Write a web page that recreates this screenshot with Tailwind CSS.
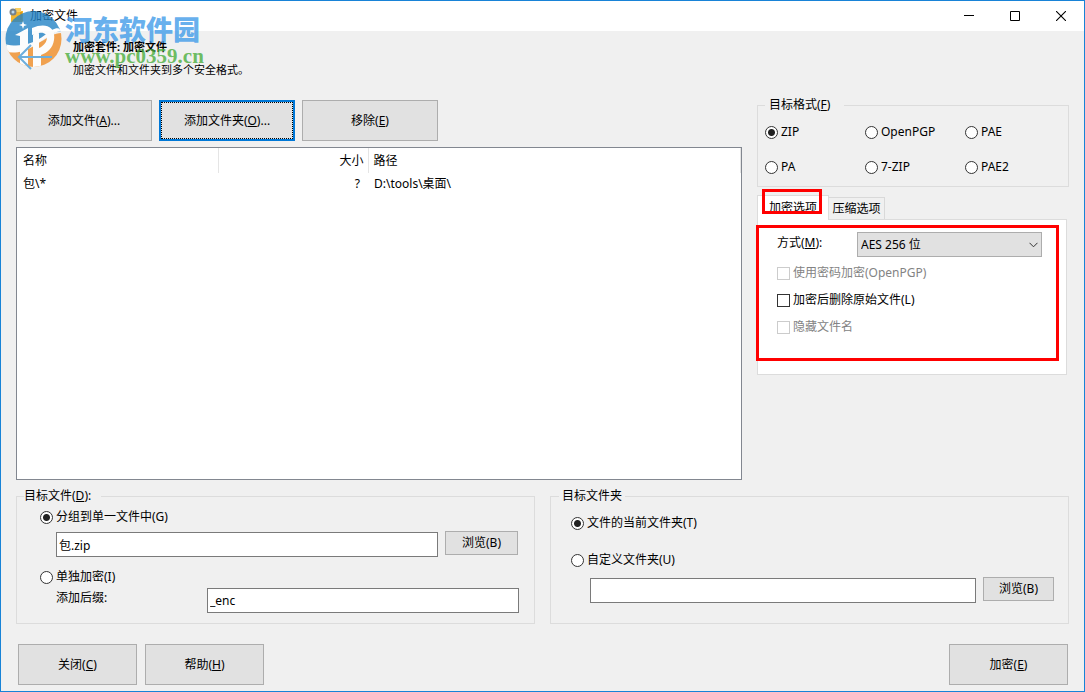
<!DOCTYPE html>
<html lang="zh-CN">
  <head>
    <meta charset="UTF-8" />
    <meta name="viewport" content="width=device-width, initial-scale=1.0" />
    <title>加密文件</title>
    <script src="https://cdn.jsdelivr.net/npm/@tailwindcss/browser@4"></script>
  </head>
  <body class="bg-[#f0f0f0] font-['Noto_Sans','Noto_Sans_CJK_SC',sans-serif] text-[12px] leading-4 text-black">
    <div class="relative min-h-screen flex flex-col border border-[#1883d7]">
      <!-- Title bar -->
      <header class="h-[30px] bg-white flex items-center justify-between">
        <div class="flex items-center gap-[5px] pl-2">
          <svg class="size-4" viewBox="0 0 16 16">
            <path d="M4 3h10v11H2V6z" fill="#f2b530" />
            <path d="M6 0h6v4H6z" fill="#f9cf62" />
            <path d="M11 4h2v8h-2z" fill="#d99a1c" />
            <circle cx="4" cy="4" r="3.5" fill="#76828b" />
            <circle cx="4" cy="4" r="1.5" fill="#bcd9ec" />
          </svg>
          <h1>加密文件</h1>
        </div>
        <div class="flex">
          <button class="w-[46px] h-[30px] flex items-center justify-center" aria-label="最小化">
            <svg class="w-[10px] h-[10px]" viewBox="0 0 10 10"><path d="M0 4h10v1H0z" /></svg>
          </button>
          <button class="w-[46px] h-[30px] flex items-center justify-center" aria-label="最大化">
            <svg class="w-[10px] h-[10px]" viewBox="0 0 10 10"><path d="M.5.5h9v9h-9z" fill="none" stroke="#000" /></svg>
          </button>
          <button class="w-[46px] h-[30px] flex items-center justify-center" aria-label="关闭">
            <svg class="w-[10px] h-[10px]" viewBox="0 0 10 10"><path d="M0 0l10 10M10 0L0 10" stroke="#000" stroke-width="1.1" /></svg>
          </button>
        </div>
      </header>

      <div class="pt-2 pl-[72px] pb-[19px] flex flex-col gap-[7px] text-[11px] leading-4">
        <p class="font-bold">加密套件: 加密文件</p>
        <p>加密文件和文件夹到多个安全格式。</p>
      </div>

      <main class="grow flex flex-col px-[15px] pb-1.5">
        <div class="grow flex gap-[15px]">
          <!-- File list -->
          <div class="grow flex flex-col gap-1.5 pt-[3px]">
            <div class="flex gap-[7px]">
              <button class="w-[136px] h-[41px] border border-[#adadad] bg-[#e1e1e1]">添加文件(<u>A</u>)...</button>
              <button class="w-[136px] h-[41px] border-2 border-[#0078d7] bg-[#e1e1e1] outline outline-dotted outline-black -outline-offset-3">添加文件夹(<u>O</u>)...</button>
              <button class="w-[136px] h-[41px] border border-[#adadad] bg-[#e1e1e1]">移除(<u>E</u>)</button>
            </div>
            <div class="grow border border-[#828790] bg-white">
              <table class="w-full table-fixed">
                <thead>
                  <tr class="h-[25px]">
                    <th class="w-[201px] pl-1.5 border-r border-[#e5e5e5] text-left font-normal">名称</th>
                    <th class="w-[150px] pr-1 border-r border-[#e5e5e5] text-right font-normal">大小</th>
                    <th class="pl-[5px] border-r border-[#e5e5e5] text-left font-normal">路径</th>
                  </tr>
                </thead>
                <tbody>
                  <tr class="h-[22px]">
                    <td class="pl-1.5">包\*</td>
                    <td class="pr-2 text-right">?</td>
                    <td class="pl-1.5">D:\tools\桌面\</td>
                  </tr>
                </tbody>
              </table>
            </div>
          </div>

          <!-- Format and options -->
          <div class="w-[312px] shrink-0">
            <fieldset class="border border-[#dcdcdc] pl-[7px] pt-[11px] pb-[11px]">
              <legend class="pl-1 pr-3.5">目标格式(<u>F</u>)</legend>
              <div class="grid grid-cols-[100px_100px_1fr] gap-y-[19px]">
                <label class="flex items-center gap-[3px]"><input type="radio" name="format" checked class="appearance-none size-[13px] rounded-full border border-[#333] bg-white checked:bg-[radial-gradient(circle,#222_3px,#fff_4px)]" />ZIP</label>
                <label class="flex items-center gap-[3px]"><input type="radio" name="format" class="appearance-none size-[13px] rounded-full border border-[#333] bg-white checked:bg-[radial-gradient(circle,#222_3px,#fff_4px)]" />OpenPGP</label>
                <label class="flex items-center gap-[3px]"><input type="radio" name="format" class="appearance-none size-[13px] rounded-full border border-[#333] bg-white checked:bg-[radial-gradient(circle,#222_3px,#fff_4px)]" />PAE</label>
                <label class="flex items-center gap-[3px]"><input type="radio" name="format" class="appearance-none size-[13px] rounded-full border border-[#333] bg-white checked:bg-[radial-gradient(circle,#222_3px,#fff_4px)]" />PA</label>
                <label class="flex items-center gap-[3px]"><input type="radio" name="format" class="appearance-none size-[13px] rounded-full border border-[#333] bg-white checked:bg-[radial-gradient(circle,#222_3px,#fff_4px)]" />7-ZIP</label>
                <label class="flex items-center gap-[3px]"><input type="radio" name="format" class="appearance-none size-[13px] rounded-full border border-[#333] bg-white checked:bg-[radial-gradient(circle,#222_3px,#fff_4px)]" />PAE2</label>
              </div>
            </fieldset>

            <div class="relative mt-2 mr-0.5">
              <div class="flex items-end" role="tablist">
                <button role="tab" aria-selected="true" class="z-10 -mb-px w-[72px] h-[25px] border border-b-0 border-[#dcdcdc] bg-white">加密选项</button>
                <button role="tab" aria-selected="false" class="-ml-px w-[57px] h-[22px] border border-b-0 border-[#d9d9d9] bg-[#f0f0f0]">压缩选项</button>
              </div>
              <div role="tabpanel" class="h-[156px] border border-[#dcdcdc] bg-white pl-[19px] pr-6 pt-3">
                <div class="flex">
                  <label for="method" class="w-20 pt-[3px]">方式(<u>M</u>):</label>
                  <div class="grow grid items-center">
                    <select id="method" class="col-start-1 row-start-1 h-[25px] appearance-none border border-[#adadad] bg-[#e1e1e1] px-[3px]">
                      <option>AES 256 位</option>
                    </select>
                    <svg class="col-start-1 row-start-1 justify-self-end mr-1 w-[9px] h-[6px] pointer-events-none" viewBox="0 0 9 6"><path d="M.5.8l4 4 4-4" fill="none" stroke="#333" /></svg>
                  </div>
                </div>
                <div class="mt-2 flex flex-col gap-[11px]">
                  <label class="flex items-center gap-[3px] text-[#838383]"><input type="checkbox" disabled class="appearance-none size-[13px] border border-[#ccc] bg-white" />使用密码加密(OpenPGP)</label>
                  <label class="flex items-center gap-[3px]"><input type="checkbox" class="appearance-none size-[13px] border border-[#333] bg-white" />加密后删除原始文件(L)</label>
                  <label class="flex items-center gap-[3px] text-[#838383]"><input type="checkbox" disabled class="appearance-none size-[13px] border border-[#ccc] bg-white" />隐藏文件名</label>
                </div>
              </div>
              <!-- Highlight frames -->
              <div class="absolute z-20 left-[5px] -top-1.5 w-[60px] h-[25px] border-3 border-[#f00] pointer-events-none"></div>
              <div class="absolute z-20 -left-px right-2 top-[30px] h-[136px] border-3 border-[#f00] pointer-events-none"></div>
            </div>
          </div>
        </div>

        <!-- Target -->
        <div class="mt-2 grid grid-cols-2 gap-[15px]">
          <fieldset class="min-w-0 border border-[#dcdcdc] pl-[23px] pr-[15px] pt-[5px] pb-2.5">
            <legend class="-ml-4 pr-2.5">目标文件(<u>D</u>):</legend>
            <label class="flex items-center gap-[3px]"><input type="radio" name="target" checked class="appearance-none size-[13px] rounded-full border border-[#333] bg-white checked:bg-[radial-gradient(circle,#222_3px,#fff_4px)]" />分组到单一文件中(G)</label>
            <div class="mt-1.5 ml-4 mr-px flex items-start gap-[7px]">
              <input type="text" value="包.zip" aria-label="目标文件" class="mt-px grow min-w-0 h-[25px] border border-[#7a7a7a] bg-white px-0.5" />
              <button class="w-[73px] h-6 border border-[#adadad] bg-[#e1e1e1]">浏览(B)</button>
            </div>
            <label class="mt-3 flex items-center gap-[3px]"><input type="radio" name="target" class="appearance-none size-[13px] rounded-full border border-[#333] bg-white checked:bg-[radial-gradient(circle,#222_3px,#fff_4px)]" />单独加密(I)</label>
            <div class="mt-[3px] ml-4 flex">
              <label for="suffix" class="w-[151px] pt-0.5">添加后缀:</label>
              <input id="suffix" type="text" value="_enc" class="grow min-w-0 h-[25px] border border-[#7a7a7a] bg-white px-0.5" />
            </div>
          </fieldset>

          <fieldset class="min-w-0 border border-[#dcdcdc] pl-5 pr-3.5 pt-[11px]">
            <legend class="-ml-3 px-[3px]">目标文件夹</legend>
            <label class="flex items-center gap-[3px]"><input type="radio" name="folder" checked class="appearance-none size-[13px] rounded-full border border-[#333] bg-white checked:bg-[radial-gradient(circle,#222_3px,#fff_4px)]" />文件的当前文件夹(T)</label>
            <label class="mt-[21px] flex items-center gap-[3px]"><input type="radio" name="folder" class="appearance-none size-[13px] rounded-full border border-[#333] bg-white checked:bg-[radial-gradient(circle,#222_3px,#fff_4px)]" />自定义文件夹(U)</label>
            <div class="mt-[9px] ml-[19px] flex items-start gap-[7px]">
              <input type="text" aria-label="自定义文件夹" class="mt-px grow min-w-0 h-[25px] border border-[#7a7a7a] bg-white px-0.5" />
              <button class="w-[71px] h-6 border border-[#adadad] bg-[#e1e1e1]">浏览(B)</button>
            </div>
          </fieldset>
        </div>

        <footer class="mt-5 pl-0.5 pr-px flex gap-2">
          <button class="w-[119px] h-[41px] border border-[#adadad] bg-[#e1e1e1]">关闭(<u>C</u>)</button>
          <button class="w-[119px] h-[41px] border border-[#adadad] bg-[#e1e1e1]">帮助(<u>H</u>)</button>
          <button class="ml-auto w-[119px] h-[41px] border border-[#adadad] bg-[#e1e1e1]">加密(<u>E</u>)</button>
        </footer>
      </main>

      <!-- Site watermark -->
      <div class="absolute left-[3px] top-[7px] flex pointer-events-none">
        <svg class="w-[58px] h-[64px] opacity-80" viewBox="0 0 58 64">
          <defs>
            <clipPath id="globe"><ellipse cx="29.5" cy="31" rx="28" ry="28" /></clipPath>
          </defs>
          <g clip-path="url(#globe)">
            <path d="M0 0h58v24C44 20 36 42 0 38z" fill="#2484c6" />
            <path d="M0 42C30 46 44 24 58 25v39H0z" fill="#f08e28" />
            <!-- 1 and D -->
            <path d="M11 27l13-7v40h-8V28z" fill="#fff" />
            <path d="M28 20c14-6 24-1 22 12-1 8-7 13-13 15v13h-8V27l6-3v16c10-4 11-17 0-15l-7 2z" fill="#fff" />
            <path d="M0 36c24 6 38-7 48-14 5-3 8-2 10 1-10 0-20 10-28 15-12 7-22 8-30 5z" fill="#fff" />
          </g>
          <path d="M19 13l1 3 3 1-3 1-1 3-1-3-3-1 3-1z" fill="#fff" />
          <path d="M27 37L15 49l12 12M15 49h33" fill="none" stroke="#4c9ed8" stroke-width="2" />
        </svg>
        <div class="pl-[3px] pt-1.5">
          <p class="font-['Noto_Sans_CJK_SC',sans-serif] text-[27px] leading-[30px] font-black text-[#3e9be9]/80">河东软件园</p>
          <p class="font-['Liberation_Serif',serif] text-[21px] leading-6 font-bold text-[#4aae3c]/80">www.pc0359.cn</p>
        </div>
      </div>
    </div>
  </body>
</html>
